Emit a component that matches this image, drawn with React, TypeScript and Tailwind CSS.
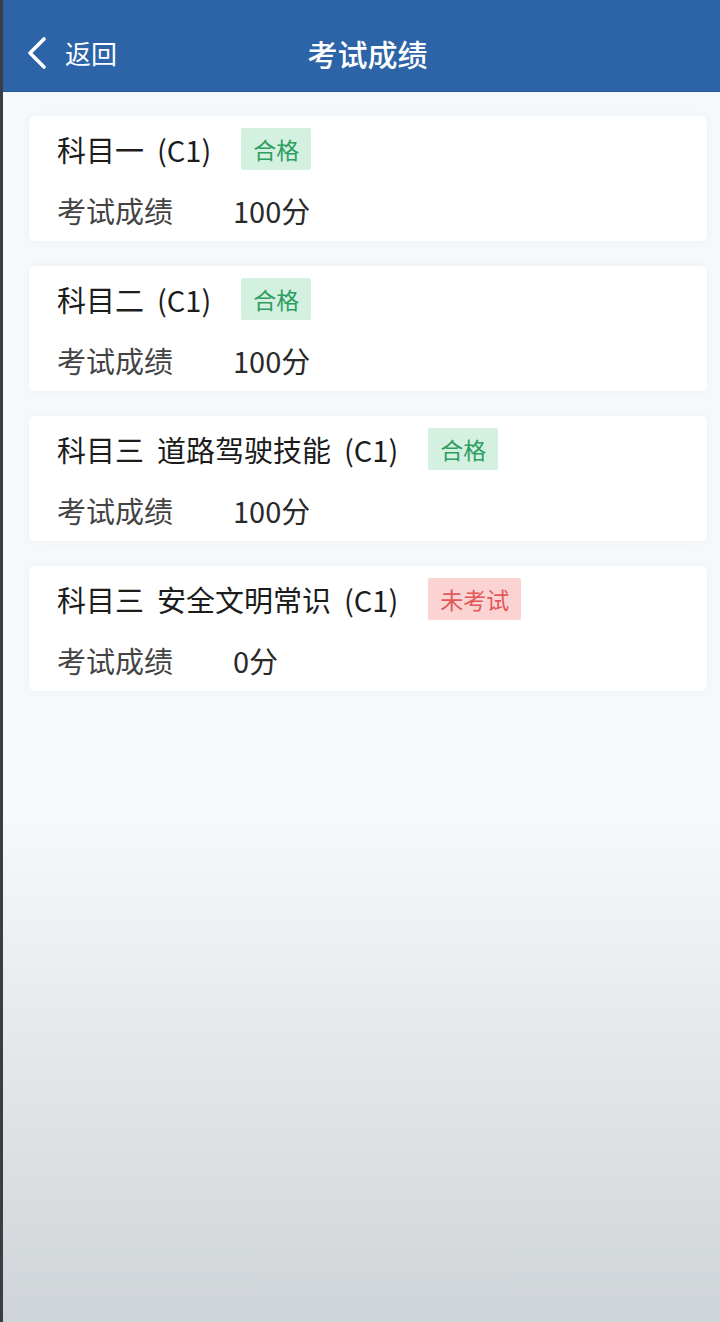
import React from "react";

type Exam = {
    name: string;
    score: string;
    passed: boolean;
};

const exams: Exam[] = [
    { name: "科目一 (C1)", score: "100分", passed: true },
    { name: "科目二 (C1)", score: "100分", passed: true },
    { name: "科目三 道路驾驶技能 (C1)", score: "100分", passed: true },
    { name: "科目三 安全文明常识 (C1)", score: "0分", passed: false },
];

function ExamCard({ exam }: { exam: Exam }) {
    return (
        <div className="bg-white rounded-[6px] pl-[28px] pt-[12px] pb-[13px] shadow-[0_0_8px_rgba(120,150,170,0.08)]">
            <div className="flex items-center h-[42px]">
                <span className="text-[29px] leading-none text-[#1c1c1c] [word-spacing:6.5px]">{exam.name}</span>
                {exam.passed ? (
                    <span className="ml-[30px] h-[42px] px-[12px] flex items-center bg-[#d4f0e0] text-[#2e9d60] text-[23px] rounded-[2px]">
                        合格
                    </span>
                ) : (
                    <span className="ml-[30px] h-[42px] px-[12px] flex items-center bg-[#fbd3d3] text-[#e25858] text-[23px] rounded-[2px]">
                        未考试
                    </span>
                )}
            </div>
            <div className="flex items-center h-[36px] mt-[22px] text-[29px] leading-none text-[#444444]">
                <span className="w-[176px]">考试成绩</span>
                <span className="text-[#2a2a2a]">{exam.score}</span>
            </div>
        </div>
    );
}

export default function App() {
    return (
        <div
            className="flex w-[720px] h-[1322px] overflow-hidden"
            style={{ fontFamily: '"Noto Sans CJK SC", "Noto Sans", sans-serif' }}
        >
            {/* dark strip on the left edge */}
            <div className="w-[3px] shrink-0 bg-[#3a3d42]" />

            <div className="flex-1 flex flex-col bg-linear-to-b from-[#f6f9fb] from-62% to-[#cfd4d8]">
                {/* Header */}
                <header className="relative h-[92px] shrink-0 bg-[#2c64a7] border-b border-[#24578f] flex items-center justify-center pt-[14px] pl-[12px]">
                    <div className="absolute left-[22px] top-[14px] bottom-0 flex items-center gap-[16px]">
                        <svg width="24" height="34" viewBox="0 0 24 34" fill="none">
                            <path d="M19 3 L5 17 L19 31" stroke="white" strokeWidth="3.6" strokeLinecap="round" strokeLinejoin="round" />
                        </svg>
                        <span className="text-white text-[26px] leading-none">返回</span>
                    </div>
                    <h1 className="text-white text-[30px] font-medium leading-none">考试成绩</h1>
                </header>

                {/* Exam list */}
                <div className="flex flex-col gap-[25px] pt-[24px] pl-[26px] pr-[13px]">
                    {exams.map((exam) => (
                        <ExamCard key={exam.name} exam={exam} />
                    ))}
                </div>
            </div>
        </div>
    );
}
